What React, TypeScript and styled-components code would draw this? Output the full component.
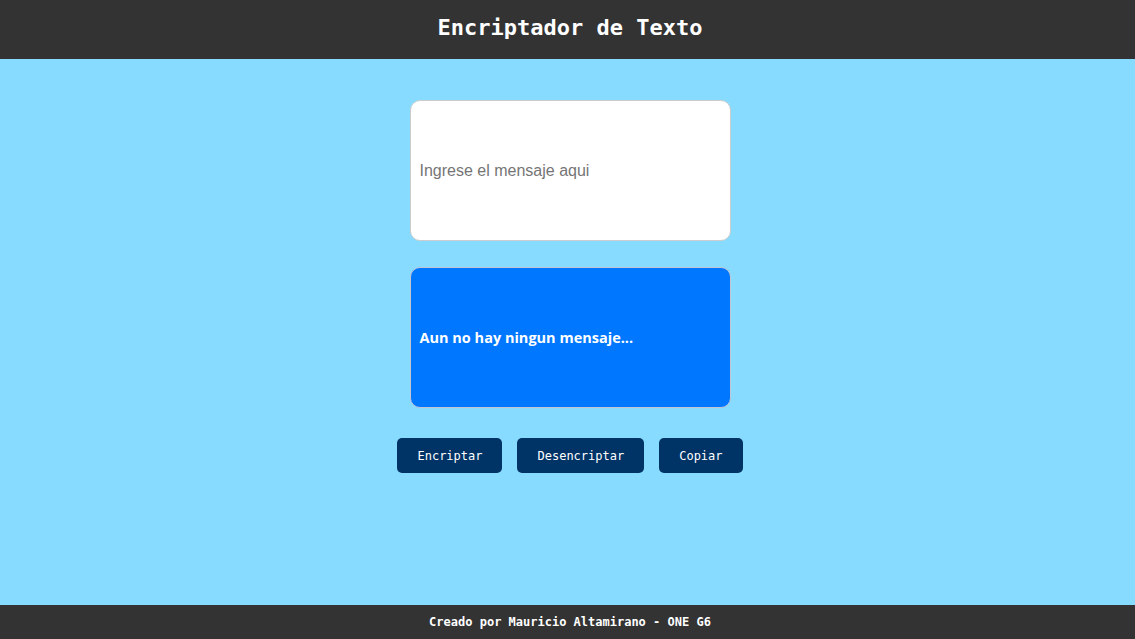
import React from "react";
import styled, { createGlobalStyle } from "styled-components";

const Global = createGlobalStyle`
  html, body { margin: 0; padding: 0; height: 100%; }
  body { background: #87dbff; font-family: "DejaVu Sans Mono", monospace; }
  #root { min-height: 100vh; }
`;

const Page = styled.div`
  display: flex;
  flex-direction: column;
  min-height: 100vh;
  background: #87dbff;
`;

const Header = styled.header`
  height: 59px;
  box-sizing: border-box;
  padding: 0 0 4px 5px;
  background: #333333;
  color: #ffffff;
  display: flex;
  align-items: center;
  justify-content: center;
`;

const Title = styled.h1`
  margin: 0;
  font-family: "DejaVu Sans Mono", monospace;
  font-weight: bold;
  font-size: 22px;
  letter-spacing: 0;
`;

const Main = styled.main`
  flex: 1;
  display: flex;
  flex-direction: column;
  align-items: center;
  padding: 41px 0 0 5px;
`;

const Input = styled.textarea`
  box-sizing: border-box;
  width: 321px;
  height: 141px;
  border: 1px solid #cccccc;
  border-radius: 10px;
  background: #ffffff;
  padding: 0 9px;
  padding-top: 61px;
  font-family: "Liberation Sans", Arial, sans-serif;
  font-size: 16px;
  resize: none;
  outline: none;
  &::placeholder { color: #757575; }
`;

const Output = styled.div`
  box-sizing: border-box;
  margin-top: 26px;
  width: 321px;
  height: 141px;
  border: 1px solid #c4c4d4;
  border-radius: 10px;
  background: #0077ff;
  color: #ffffff;
  display: flex;
  align-items: center;
  padding: 0 9px;
  font-family: "Open Sans", sans-serif;
  font-weight: bold;
  font-size: 14.5px;
`;

const Buttons = styled.div`
  display: flex;
  gap: 15px;
  margin-top: 30px;
`;

const Button = styled.button`
  height: 35px;
  padding: 0 20px;
  border: none;
  border-radius: 5px;
  background: #003366;
  color: #ffffff;
  font-family: "DejaVu Sans Mono", monospace;
  font-size: 12px;
  cursor: pointer;
`;

const Footer = styled.footer`
  height: 34px;
  box-sizing: border-box;
  padding-left: 5px;
  background: #333333;
  color: #ffffff;
  display: flex;
  align-items: center;
  justify-content: center;
  font-family: "DejaVu Sans Mono", monospace;
  font-weight: bold;
  font-size: 12px;
`;

export default function App() {
  return (
    <Page>
      <Global />
      <Header>
        <Title>Encriptador de Texto</Title>
      </Header>
      <Main>
        <Input placeholder="Ingrese el mensaje aqui" />
        <Output>Aun no hay ningun mensaje...</Output>
        <Buttons>
          <Button>Encriptar</Button>
          <Button>Desencriptar</Button>
          <Button>Copiar</Button>
        </Buttons>
      </Main>
      <Footer>Creado por Mauricio Altamirano - ONE G6</Footer>
    </Page>
  );
}
